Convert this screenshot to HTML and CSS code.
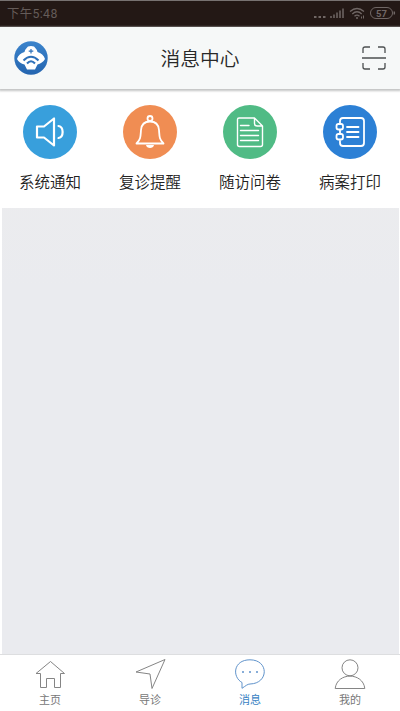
FILE: index.html
```html
<!DOCTYPE html>
<html lang="zh-CN">
<head>
<meta charset="utf-8">
<title>消息中心</title>
<link rel="stylesheet" href="styles.css">
</head>
<body>
<div class="app">
  <div class="status">
    <span class="time">下午5:48</span>
    <svg class="indicators" width="84" height="16" viewBox="0 0 84 16" fill="none" stroke="#706765">
      <g fill="#706765" stroke="none"><rect x="2" y="10" width="2.500" height="2"/><rect x="6.500" y="10" width="2.500" height="2"/><rect x="11" y="10" width="2.500" height="2"/></g>
      <path stroke-width="1.500" d="M19 12V10M22 12V8.500M25 12V6.500M28 12V4.500M31 12V2.500"/>
      <path stroke-width="1.300" d="M38 5.500Q45 -.5 52 5.500M40.300 8Q45 3.500 49.700 8M42.500 10.300Q45 8 47.500 10.300"/>
      <circle cx="45" cy="12" r="1" fill="#706765" stroke="none"/>
      <path d="M49.500 10.500v2M51.500 9.500v3"/>
      <rect x="58.500" y="1.500" width="22" height="11" rx="5.500"/>
      <path stroke-width="1.500" d="M82.300 5.500v3"/>
      <text class="battery" x="69.500" y="10.500" text-anchor="middle">57</text>
    </svg>
  </div>
  <header class="header">
    <svg class="logo" width="34" height="34" viewBox="0 0 34 34">
      <defs><linearGradient id="disc" x1="0" y1="0" x2="0" y2="1"><stop offset="0" stop-color="#3b84cc"/><stop offset="1" stop-color="#2465b0"/></linearGradient></defs>
      <circle cx="17" cy="17" r="16.700" fill="url(#disc)"/>
      <path fill="#fff" d="M10.500 11C11 8 13 7 14 5.500Q17 4.300 20 5.500C21 7 23 8 23.500 11C27 12 30 14.500 31 18C29.500 21 26.500 22.500 23.500 23.500L21 28.500H13L10.500 23.500C7 22.500 4.500 21 3 18C4 14.500 7 12 10.500 11Z"/>
      <path fill="none" stroke="#2d70b9" stroke-width="1.200" d="M17 8v4.500M14.700 10.200h4.600"/>
      <path fill="none" stroke="#2d70b9" stroke-width="2" d="M9.500 19.500Q17 12 24.500 19.500M13 22.500Q17 18 21 22.500"/>
    </svg>
    <h1 class="title">消息中心</h1>
    <svg class="scan" width="26" height="24" viewBox="0 0 26 24" fill="none" stroke="#4c4f50" stroke-width="1.300">
      <path d="M2 7V3Q2 1 4 1H9M17 1H22Q24 1 24 3V7M2 17V21Q2 23 4 23H9M17 23H22Q24 23 24 21V17M1 12H25"/>
    </svg>
  </header>
  <main class="content">
    <nav class="shortcuts">
      <a class="shortcut">
        <svg class="disc sky" viewBox="0 0 54 54"><path d="M14 21.500H21L31 13.500V40.500L21 32.500H14Z"/><path d="M35.500 21C41 22 41 32 35.500 33"/></svg>
        <span>系统通知</span>
      </a>
      <a class="shortcut">
        <svg class="disc orange" viewBox="0 0 54 54"><circle cx="27" cy="13.500" r="2.500"/><path d="M13.500 38.500C18 34 17.500 31 18 25C18.500 19 22 16.500 27 16.500S35.500 19 36 25C36.500 31 36 34 40.500 38.500Z"/><path class="solid" d="M23 40H31C30.500 44 23.500 44 23 40Z"/></svg>
        <span>复诊提醒</span>
      </a>
      <a class="shortcut">
        <svg class="disc green" viewBox="0 0 54 54"><path d="M16 13H31.500L39.500 21V39.500Q39.500 41.500 37.500 41.500H16.500Q14.500 41.500 14.500 39.500V14.500Q14.500 13 16 13ZM31.500 13V18.500Q31.500 21 34 21H39.500"/><path d="M17.500 20.500H26M17.500 25.500H35.500M17.500 30.500H35.500M17.500 35.500H35.500"/></svg>
        <span>随访问卷</span>
      </a>
      <a class="shortcut">
        <svg class="disc blue" viewBox="0 0 54 54"><path d="M17 18V16Q17 13 20 13H38Q41 13 41 16V38Q41 41 38 41H20Q17 41 17 38V36M17 25V29"/><rect x="13.500" y="19" width="6.500" height="5.500" rx="2"/><rect x="13.500" y="29" width="6.500" height="5.500" rx="2"/><path d="M24 22H35.500M24 27H35.500M24 32H35.500"/></svg>
        <span>病案打印</span>
      </a>
    </nav>
  </main>
  <nav class="tabs">
    <a class="tab">
      <svg width="32" height="32" viewBox="0 0 32 32"><path d="M2 14.500L16.500 2.500L30.500 14.500H26.500V28.500H20.500V19.500H12.500V28.500H6.500V14.500Z"/></svg>
      <span>主页</span>
    </a>
    <a class="tab">
      <svg width="32" height="32" viewBox="0 0 32 32"><path d="M31 .5L18 29.500L16 15L2 13Z"/></svg>
      <span>导诊</span>
    </a>
    <a class="tab active">
      <svg width="32" height="32" viewBox="0 0 32 32"><path d="M8 23.500C-2 18 -1 .8 16 .8C35 .8 35 24.500 16 25C13.500 25 11.500 27 8 29.300Z"/><path class="dots" d="M8 13h2M15 13h2M22 13h2"/></svg>
      <span>消息</span>
    </a>
    <a class="tab">
      <svg width="32" height="32" viewBox="0 0 32 32"><circle cx="16" cy="8.800" r="8"/><path d="M1.200 29.500C3 13 29 13 30.800 29.500Z"/></svg>
      <span>我的</span>
    </a>
  </nav>
</div>
</body>
</html>
```
FILE: styles.css
```css
* {
  box-sizing: border-box;
}

body {
  margin: 0;
  font-family: "Noto Sans CJK SC", sans-serif;
  background: #fff;
}

.app {
  display: flex;
  flex-direction: column;
  width: 400px;
  height: 711px;
  overflow: hidden;
}

.status {
  display: flex;
  flex: none;
  align-items: center;
  justify-content: space-between;
  height: 27px;
  padding: 0 4px 0 7px;
  border-top: 1px solid #777271;
  background: #231815;
  color: #655c59;
}

.time {
  font-family: Roboto, "Noto Sans CJK SC", sans-serif;
  font-size: 12.3px;
  line-height: 16px;
  letter-spacing: 0.4px;
}

.indicators {
  flex: none;
}

.battery {
  fill: #706765;
  stroke: none;
  font: bold 9.5px Roboto, sans-serif;
}

.header {
  display: flex;
  flex: none;
  align-items: center;
  justify-content: space-between;
  position: relative;
  height: 62px;
  padding: 0 13px 0 14px;
  background: #f6f8f8;
  box-shadow: 0 1px 2px 1px #c4c5c5;
}

.logo {
  flex: none;
}

.title {
  flex: 1;
  margin: 0 0 0 -9px;
  color: #282828;
  font-size: 19.8px;
  font-weight: 350;
  line-height: 28px;
  text-align: center;
}

.content {
  flex: 1;
  padding: 0 2px;
  background: linear-gradient(#ededed, #eaebef 35%);
  border: solid #fff;
  border-width: 0 1px 0 2px;
}

.shortcuts {
  display: grid;
  grid-template-columns: repeat(4, 100px);
  height: 119px;
  margin: 0 -3px 0 -4px;
  padding-top: 16px;
  background: #fff;
}

.shortcut {
  display: flex;
  flex-direction: column;
  align-items: center;
  color: #222;
  font-size: 15.5px;
  font-weight: 350;
  line-height: 24px;
}

.disc {
  width: 54px;
  height: 54px;
  margin-bottom: 10px;
  border-radius: 50%;
  fill: none;
  stroke: #fff;
  stroke-width: 1.8;
  stroke-linejoin: round;
  stroke-linecap: round;
}

.solid {
  fill: #fff;
  stroke: none;
}

.sky {
  background: #389fdc;
  stroke-width: 2.2;
}

.orange {
  background: #f08d53;
}

.green {
  background: #50bb85;
  stroke-width: 1.4;
}

.blue {
  background: #2c80d5;
}

.tabs {
  display: grid;
  flex: none;
  grid-template-columns: repeat(4, 100px);
  height: 57px;
  padding-top: 4px;
  border-top: 1px solid #dddee0;
  background: #fff;
}

.tab {
  display: flex;
  flex-direction: column;
  align-items: center;
  color: #777;
  font-size: 11px;
  line-height: 16px;
}

.tab svg {
  fill: none;
  stroke: #858585;
  stroke-width: 1;
}

.tab.active {
  color: #397fc3;
}

.tab.active svg {
  stroke: #6093cb;
}

.tab.active .dots {
  stroke-width: 1.5;
}
```
